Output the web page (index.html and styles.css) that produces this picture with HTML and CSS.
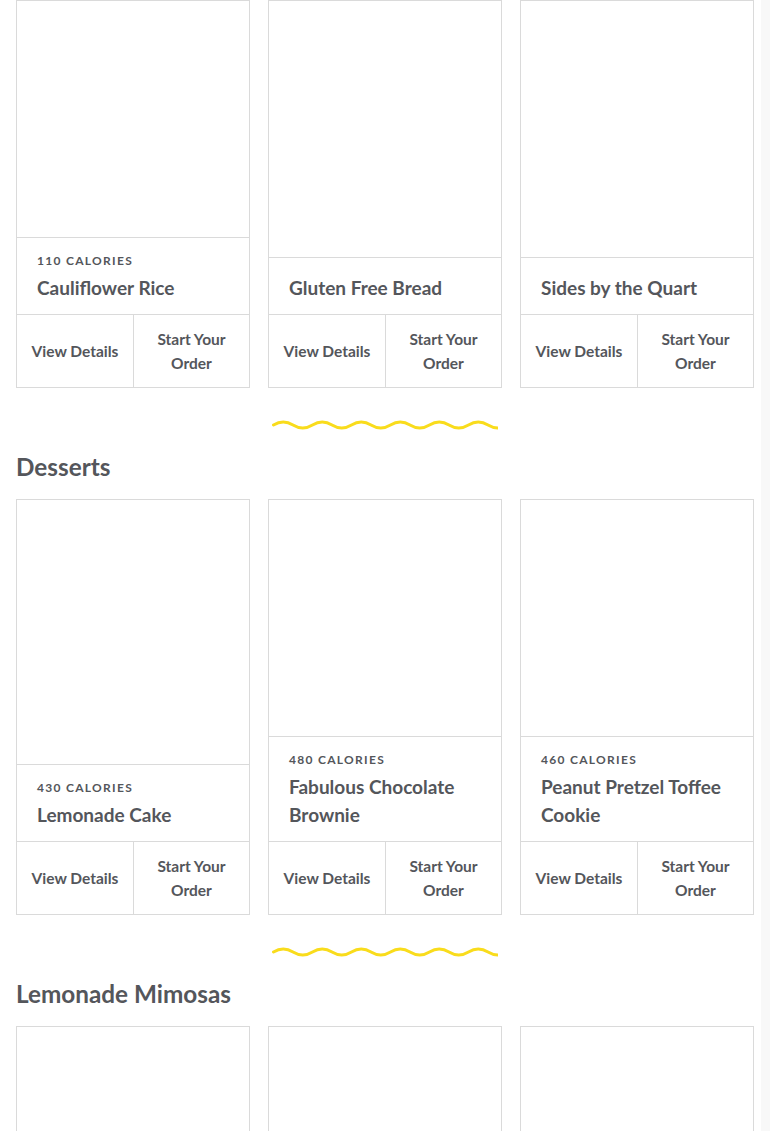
FILE: index.html
```html
<!DOCTYPE html>
<html lang="en">
<head>
<meta charset="utf-8">
<title>Menu</title>
<link rel="stylesheet" href="styles.css">
</head>
<body>
<main class="menu">
  <section class="category">
    <div class="grid">
      <article class="card">
        <div class="card-image"></div>
        <div class="card-info">
          <div class="calories">110 CALORIES</div>
          <h3 class="name">Cauliflower Rice</h3>
        </div>
        <div class="card-actions">
          <a class="action" href="#">View Details</a>
          <a class="action" href="#">Start Your Order</a>
        </div>
      </article>
      <article class="card">
        <div class="card-image"></div>
        <div class="card-info">
          <h3 class="name">Gluten Free Bread</h3>
        </div>
        <div class="card-actions">
          <a class="action" href="#">View Details</a>
          <a class="action" href="#">Start Your Order</a>
        </div>
      </article>
      <article class="card">
        <div class="card-image"></div>
        <div class="card-info">
          <h3 class="name">Sides by the Quart</h3>
        </div>
        <div class="card-actions">
          <a class="action" href="#">View Details</a>
          <a class="action" href="#">Start Your Order</a>
        </div>
      </article>
    </div>
  </section>

  <section class="category">
    <div class="divider">
      <svg width="226" height="12" viewBox="0 0 226 12" aria-hidden="true">
        <path d="M1.5,6 q9.75,-6 19.5,0 t19.5,0 t19.5,0 t19.5,0 t19.5,0 t19.5,0 t19.5,0 t19.5,0 t19.5,0 t19.5,0 t19.5,0 q4.9,3 9.75,3" fill="none" stroke="#f9dc1c" stroke-width="3" stroke-linecap="round"/>
      </svg>
    </div>
    <h2 class="category-title">Desserts</h2>
    <div class="grid">
      <article class="card">
        <div class="card-image"></div>
        <div class="card-info">
          <div class="calories">430 CALORIES</div>
          <h3 class="name">Lemonade Cake</h3>
        </div>
        <div class="card-actions">
          <a class="action" href="#">View Details</a>
          <a class="action" href="#">Start Your Order</a>
        </div>
      </article>
      <article class="card">
        <div class="card-image"></div>
        <div class="card-info">
          <div class="calories">480 CALORIES</div>
          <h3 class="name">Fabulous Chocolate Brownie</h3>
        </div>
        <div class="card-actions">
          <a class="action" href="#">View Details</a>
          <a class="action" href="#">Start Your Order</a>
        </div>
      </article>
      <article class="card">
        <div class="card-image"></div>
        <div class="card-info">
          <div class="calories">460 CALORIES</div>
          <h3 class="name">Peanut Pretzel Toffee Cookie</h3>
        </div>
        <div class="card-actions">
          <a class="action" href="#">View Details</a>
          <a class="action" href="#">Start Your Order</a>
        </div>
      </article>
    </div>
  </section>

  <section class="category">
    <div class="divider">
      <svg width="226" height="12" viewBox="0 0 226 12" aria-hidden="true">
        <path d="M1.5,6 q9.75,-6 19.5,0 t19.5,0 t19.5,0 t19.5,0 t19.5,0 t19.5,0 t19.5,0 t19.5,0 t19.5,0 t19.5,0 t19.5,0 q4.9,3 9.75,3" fill="none" stroke="#f9dc1c" stroke-width="3" stroke-linecap="round"/>
      </svg>
    </div>
    <h2 class="category-title">Lemonade Mimosas</h2>
    <div class="grid">
      <article class="card">
        <div class="card-image card-image-tall"></div>
      </article>
      <article class="card">
        <div class="card-image card-image-tall"></div>
      </article>
      <article class="card">
        <div class="card-image card-image-tall"></div>
      </article>
    </div>
  </section>
</main>
</body>
</html>
```

FILE: styles.css
```css
html {
  overflow: hidden;
  background: linear-gradient(to right, #ffffff 761px, #f8f8f8 761px);
}

body {
  margin: 0;
  font-family: Lato, "Open Sans", "Liberation Sans", sans-serif;
  color: #54565b;
}

.menu {
  width: 738px;
  padding: 0 16px;
}

.grid {
  display: grid;
  grid-template-columns: repeat(3, 234px);
  column-gap: 18px;
}

.card {
  display: flex;
  flex-direction: column;
  border: 1px solid #dadada;
  background: #fff;
}

.card-image {
  flex: 1;
  min-height: 236px;
}

.card-image-tall {
  min-height: 257px;
}

.card-info {
  border-top: 1px solid #dadada;
  padding: 16px 20px 12px;
}

.calories {
  font-size: 12px;
  line-height: 16px;
  font-weight: 700;
  letter-spacing: 1.3px;
  margin-bottom: 4px;
  position: relative;
  top: -1px;
}

.name {
  margin: 0;
  font-size: 19px;
  line-height: 28px;
  font-weight: 700;
}

.card-actions {
  display: grid;
  grid-template-columns: 1fr 1fr;
  border-top: 1px solid #dadada;
}

.action {
  display: flex;
  align-items: center;
  justify-content: center;
  text-align: center;
  padding: 12px 10px;
  min-height: 48px;
  font-size: 15.5px;
  line-height: 24px;
  font-weight: 700;
  color: #54565b;
  text-decoration: none;
}

.action + .action {
  border-left: 1px solid #dadada;
  padding: 12px 20px;
}

.divider {
  display: flex;
  justify-content: center;
  margin-top: 31px;
  height: 12px;
}

.divider svg {
  display: block;
}

.category-title {
  margin: 21px 0 17px;
  font-size: 24.3px;
  line-height: 30px;
  font-weight: 700;
}
```
